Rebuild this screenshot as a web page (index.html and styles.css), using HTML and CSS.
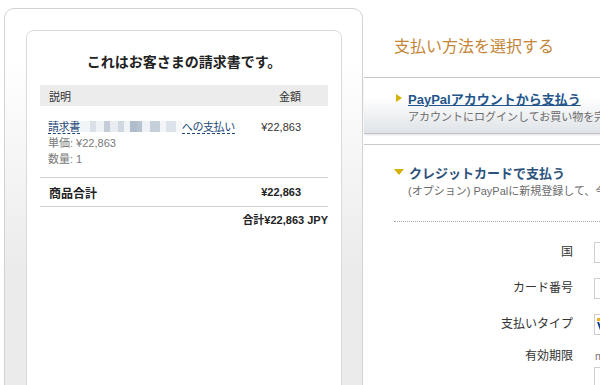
FILE: index.html
```html
<!DOCTYPE html>
<html>
<head>
<meta charset="utf-8">
<title>請求書の支払い</title>
<link rel="stylesheet" href="styles.css">
</head>
<body>
<div class="page">
  <div class="invoice-wrap">
    <div class="invoice">
      <h1 class="invoice-title">これはお客さまの請求書です。</h1>
      <table class="items">
        <thead>
          <tr><th>説明</th><th class="amt">金額</th></tr>
        </thead>
        <tbody>
          <tr class="item">
            <td>
              <div class="item-name"><span class="dash">請求書</span><span class="blur"></span><span class="dash">への支払い</span></div>
              <div class="sub">単価: ¥22,863</div>
              <div class="sub">数量: 1</div>
            </td>
            <td class="amt">¥22,863</td>
          </tr>
          <tr class="subtotal">
            <td>商品合計</td>
            <td class="amt">¥22,863</td>
          </tr>
        </tbody>
      </table>
      <div class="grand">合計¥22,863 JPY</div>
    </div>
  </div>

  <div class="pay">
    <h2 class="pay-title">支払い方法を選択する</h2>

    <div class="method paypal">
      <div class="method-head"><span class="arrow-right"></span><a class="method-link" href="#">PayPalアカウントから支払う</a></div>
      <div class="method-note">アカウントにログインしてお買い物を完了す</div>
    </div>

    <div class="method card">
      <div class="method-head"><span class="arrow-down"></span><span class="method-name">クレジットカードで支払う</span></div>
      <div class="method-note">(オプション) PayPalに新規登録して、今</div>
      <div class="dots"></div>

      <div class="form">
        <div class="row"><label class="lbl">国</label><div class="field"></div></div>
        <div class="row"><label class="lbl">カード番号</label><div class="field"></div></div>
        <div class="row"><label class="lbl">支払いタイプ</label>
          <div class="field">
            <svg class="card-icon" width="22" height="14" viewBox="0 0 22 14">
              <rect x="0" y="0" width="22" height="14" fill="#fff"/>
              <rect x="0" y="0" width="22" height="3" fill="#f2b01e"/>
              <path d="M1 4 L4 12 L7 4" fill="none" stroke="#1a3f8c" stroke-width="2"/>
            </svg>
          </div>
        </div>
        <div class="row row-top"><label class="lbl">有効期限</label>
          <div class="expiry">
            <div class="hint">m</div>
            <div class="field"></div>
          </div>
        </div>
      </div>
    </div>
  </div>
</div>
</body>
</html>
```

FILE: styles.css
```css
body {
    margin: 0;
    background: #fff;
    font-family: "Liberation Sans", "Noto Sans CJK JP", sans-serif;
    color: #333;
    overflow: hidden;
}
.page {
    display: flex;
    align-items: flex-start;
    width: 1000px;
}

/* левая колонка - счёт */
.invoice-wrap {
    box-sizing: border-box;
    width: 359px;
    height: 420px;
    margin: 8px 0 0 4px;
    padding: 21px 20px 0 21px;
    border: 1px solid #d2d2d2;
    border-radius: 10px;
    background: linear-gradient(#fff 0, #fff 50px, #ebebeb 260px);
}
.invoice {
    box-sizing: border-box;
    height: 400px;
    padding: 21px 13px 0 13px;
    border: 1px solid #dadada;
    border-radius: 8px;
    background: #fff;
}
.invoice-title {
    margin: 0 0 13px 0;
    font-size: 14px;
    line-height: 20px;
    font-weight: bold;
    text-align: center;
    color: #222;
}
.items {
    width: 100%;
    border-collapse: collapse;
    font-size: 11px;
}
.items th {
    background: #ececec;
    font-weight: normal;
    text-align: left;
    height: 21px;
    padding: 0 0 0 9px;
    color: #333;
}
.items th.amt, .items td.amt {
    text-align: right;
    padding-right: 27px;
}
.item td {
    vertical-align: top;
    padding: 13px 0 10px 8px;
    line-height: 16px;
    border-bottom: 1px solid #cfcfcf;
}
.item td.amt {
    padding-left: 0;
}
.item-name {
    color: #1b4878;
    white-space: nowrap;
    letter-spacing: -0.4px;
}
.dash {
    border-bottom: 1px dashed #1b4878;
}
.blur {
    display: inline-block;
    width: 102px;
    height: 11px;
    vertical-align: -1px;
    filter: blur(0.6px);
    background:
        linear-gradient(90deg, #f2f5f8 0 10px, #d9e0e8 10px 16px, #eef2f5 16px 24px, #c3ccd7 24px 30px,
            #e9edf2 30px 38px, #cfd7e1 38px 44px, #f0f3f6 44px 50px, #aebccc 50px 57px, #b7c3d1 57px 62px,
            #eef1f5 62px 70px, #c5cfda 70px 80px, #f3f5f8 80px 86px, #dde3ea 86px 96px, #f5f7f9 96px 102px);
}
.sub {
    color: #7a7a7a;
}
.subtotal td {
    height: 28px;
    padding: 0 0 0 9px;
    font-size: 12px;
    font-weight: bold;
    color: #222;
    border-bottom: 1px solid #cfcfcf;
}
.subtotal td.amt {
    font-size: 11px;
    padding-left: 0;
}
.grand {
    padding-top: 4px;
    text-align: right;
    font-size: 11px;
    font-weight: bold;
    color: #222;
}

/* правая колонка - способ оплаты */
.pay {
    width: 420px;
    margin-left: 1px;
}
.pay-title {
    margin: 36px 0 19px 30px;
    font-size: 16px;
    line-height: 22px;
    font-weight: normal;
    color: #c48636;
}
.method {
    border-top: 1px solid #c9c9c9;
    padding-left: 32px;
    white-space: nowrap;
}
.paypal {
    padding-top: 11px;
    padding-bottom: 8px;
    background: linear-gradient(#fff 35%, #dfe3e7);
    border-bottom: 1px solid #c2c2c2;
    box-shadow: 0 1px 2px rgba(0, 0, 0, 0.12);
}
.card {
    margin-top: 10px;
    padding-top: 18px;
    padding-left: 0;
}
.card .method-head, .card .method-note {
    margin-left: 32px;
}
.method-head {
    display: flex;
    align-items: center;
    gap: 6px;
    height: 18px;
    font-size: 13px;
    font-weight: bold;
}
.arrow-right {
    width: 0;
    height: 0;
    border-top: 4px solid transparent;
    border-bottom: 4px solid transparent;
    border-left: 6px solid #d6b10a;
}
.arrow-down {
    width: 0;
    height: 0;
    border-left: 5px solid transparent;
    border-right: 5px solid transparent;
    border-top: 6px solid #d6b10a;
    margin-left: -2px;
    margin-right: -1px;
}
.method-link {
    color: #24568c;
    text-decoration: underline;
}
.method-name {
    color: #2c527c;
}
.method-note {
    margin-top: 2px;
    padding-left: 12px;
    font-size: 11px;
    line-height: 16px;
    color: #6b6b6b;
}
.dots {
    margin: 22px 0 0 30px;
    border-top: 1px dotted #a8a8a8;
}
.form {
    padding-top: 12px;
}
.row {
    display: flex;
    align-items: center;
    gap: 21px;
    height: 36px;
}
.row-top {
    align-items: flex-start;
    padding-top: 6px;
}
.lbl {
    width: 209px;
    text-align: right;
    font-size: 12px;
    line-height: 16px;
    color: #333;
}
.field {
    box-sizing: border-box;
    width: 160px;
    height: 21px;
    border: 1px solid #cfcfcf;
    background: #fff;
}
.card-icon {
    display: block;
    margin: 3px 0 0 2px;
}
.hint {
    font-size: 11px;
    line-height: 16px;
    color: #777;
    margin: 0 0 3px 1px;
}
```
